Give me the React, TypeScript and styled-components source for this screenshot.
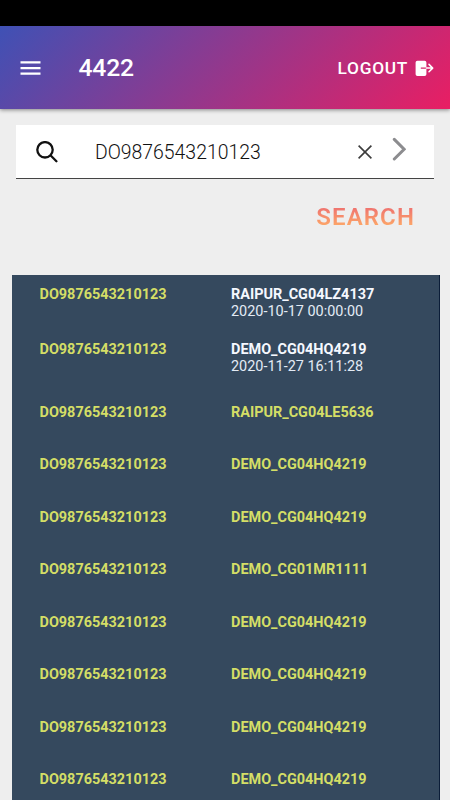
import React from "react";
import styled, { createGlobalStyle } from "styled-components";

const GlobalStyle = createGlobalStyle`
  * { box-sizing: border-box; }
  body { margin: 0; background: #eeeeee; font-family: Roboto, sans-serif; }
`;

const Screen = styled.div`
  height: 800px;
  display: flex;
  flex-direction: column;
  overflow: hidden;
  background: #eeeeee;
`;

const StatusBar = styled.div`
  flex: none;
  height: 26px;
  background: #000;
`;

const AppBar = styled.header`
  flex: none;
  height: 83px;
  display: flex;
  align-items: center;
  padding: 1px 16px 0 20px;
  color: #fff;
  background: linear-gradient(135deg, #3f51b5, #e91e63);
  box-shadow: 0 1px 4px rgba(0, 0, 0, 0.45);
`;

const IconButton = styled.button`
  flex: none;
  display: flex;
  padding: 0;
  border: 0;
  background: none;
  color: inherit;
`;

const Title = styled.h1`
  flex: 1;
  margin: 0 0 0 37.5px;
  font-size: 24.7px;
  line-height: 30px;
  font-weight: 500;
  letter-spacing: -0.2px;
`;

const Logout = styled.button`
  display: flex;
  align-items: center;
  gap: 7px;
  padding: 0;
  border: 0;
  background: none;
  color: #fff;
  font: 500 17.3px/24px Roboto, sans-serif;
  letter-spacing: 0.7px;
`;

const SearchBox = styled.div`
  flex: none;
  display: flex;
  align-items: center;
  height: 54px;
  margin: 16px 16px 0;
  padding: 0 28px 0 20px;
  background: #fff;
  border-bottom: 1px solid #444;
`;

const Query = styled.span`
  flex: 1;
  margin: 2px 0 0 37px;
  color: #111;
  font-size: 19.4px;
  line-height: 24px;
  font-weight: 350;
`;

const ClearButton = styled(IconButton)`
  margin-right: 20px;
`;

const NextButton = styled(IconButton)`
  margin-bottom: 5px;
`;

const Actions = styled.div`
  flex: none;
  display: flex;
  justify-content: flex-end;
  height: 95.5px;
  padding: 23px 35px 0 0;
`;

const SearchButton = styled.button`
  height: 30px;
  padding: 0;
  border: 0;
  color: transparent;
  background: linear-gradient(180deg, #ef746f 20%, #ffb067 90%);
  background-clip: text;
  -webkit-background-clip: text;
  font: 600 24px/30px Roboto, sans-serif;
  letter-spacing: 1.1px;
`;

const List = styled.main`
  flex: 1;
  margin: 0 10px 0 11.5px;
  background: #35495e;
  border-right: 1px solid #0b1d38;
  overflow: hidden;
`;

const Row = styled.div<{ $height: number }>`
  display: grid;
  grid-template-columns: 191.5px 1fr;
  height: ${(p) => p.$height}px;
  padding: 11px 0 0 28px;
  font-size: 14.45px;
  line-height: 17px;
`;

const OrderId = styled.strong`
  color: #d4de66;
  font-weight: 700;
`;

const Vehicle = styled.strong<{ $visited: boolean }>`
  display: block;
  color: ${(p) => (p.$visited ? "#f5f8ff" : "#d4de66")};
  font-weight: 700;
`;

const Timestamp = styled.time`
  display: block;
  color: #e3ebf5;
`;

type Entry = { vehicle: string; time?: string; height: number };

const ORDER = "DO9876543210123";

const ENTRIES: Entry[] = [
  { vehicle: "RAIPUR_CG04LZ4137", time: "2020-10-17 00:00:00", height: 55.5 },
  { vehicle: "DEMO_CG04HQ4219", time: "2020-11-27 16:11:28", height: 62.5 },
  { vehicle: "RAIPUR_CG04LE5636", height: 52.5 },
  { vehicle: "DEMO_CG04HQ4219", height: 52.5 },
  { vehicle: "DEMO_CG04HQ4219", height: 52.5 },
  { vehicle: "DEMO_CG01MR1111", height: 52.5 },
  { vehicle: "DEMO_CG04HQ4219", height: 52.5 },
  { vehicle: "DEMO_CG04HQ4219", height: 52.5 },
  { vehicle: "DEMO_CG04HQ4219", height: 52.5 },
  { vehicle: "DEMO_CG04HQ4219", height: 52.5 },
];

const MenuIcon = () => (
  <svg width="21" height="16" viewBox="0 0 21 16" fill="none" stroke="currentColor" strokeWidth="2.1">
    <path d="M.5 2.4h20M.5 8.1h20M.5 13.6h20" />
  </svg>
);

const LogoutIcon = () => (
  <svg width="19" height="17" viewBox="0 0 19 17" fill="none">
    <path d="M2.4.7h7.2q1.8 0 1.8 1.8v4.9H5.8v1.4h5.6v5.5q0 1.8-1.8 1.8H2.4q-1.8 0-1.8-1.8V2.5Q.6.7 2.4.7Z" fill="currentColor" />
    <path d="M11.4 8.1h6M14 4.4l3.7 3.7-3.7 3.7" stroke="currentColor" strokeWidth="1.5" strokeLinecap="round" strokeLinejoin="round" />
  </svg>
);

const SearchIcon = () => (
  <svg width="22" height="22" viewBox="0 0 22 22" fill="none" stroke="#111" strokeWidth="2.3" strokeLinecap="round">
    <circle cx="9" cy="8.8" r="7.7" />
    <path d="M14.7 14.5l5.7 5.7" />
  </svg>
);

const ClearIcon = () => (
  <svg width="14" height="14" viewBox="0 0 14 14" fill="none" stroke="#3c3c3c" strokeWidth="1.6">
    <path d="M.6.6l12.8 12.8M13.4.6L.6 13.4" />
  </svg>
);

const ChevronIcon = () => (
  <svg width="14" height="24" viewBox="0 0 14 24" fill="none" stroke="#8c8c8f" strokeWidth="3" strokeLinecap="round">
    <path d="M2.3 2.4l9.8 9.8-9.8 9.8" />
  </svg>
);

export default function App() {
  return (
    <>
      <GlobalStyle />
      <Screen>
        <StatusBar />
        <AppBar>
          <IconButton aria-label="Menu">
            <MenuIcon />
          </IconButton>
          <Title>4422</Title>
          <Logout>
            LOGOUT
            <LogoutIcon />
          </Logout>
        </AppBar>
        <SearchBox>
          <SearchIcon />
          <Query>{ORDER}</Query>
          <ClearButton aria-label="Clear">
            <ClearIcon />
          </ClearButton>
          <NextButton aria-label="Next">
            <ChevronIcon />
          </NextButton>
        </SearchBox>
        <Actions>
          <SearchButton>SEARCH</SearchButton>
        </Actions>
        <List>
          {ENTRIES.map((entry, index) => (
            <Row key={index} $height={entry.height}>
              <OrderId>{ORDER}</OrderId>
              <div>
                <Vehicle $visited={Boolean(entry.time)}>{entry.vehicle}</Vehicle>
                {entry.time && <Timestamp>{entry.time}</Timestamp>}
              </div>
            </Row>
          ))}
        </List>
      </Screen>
    </>
  );
}
